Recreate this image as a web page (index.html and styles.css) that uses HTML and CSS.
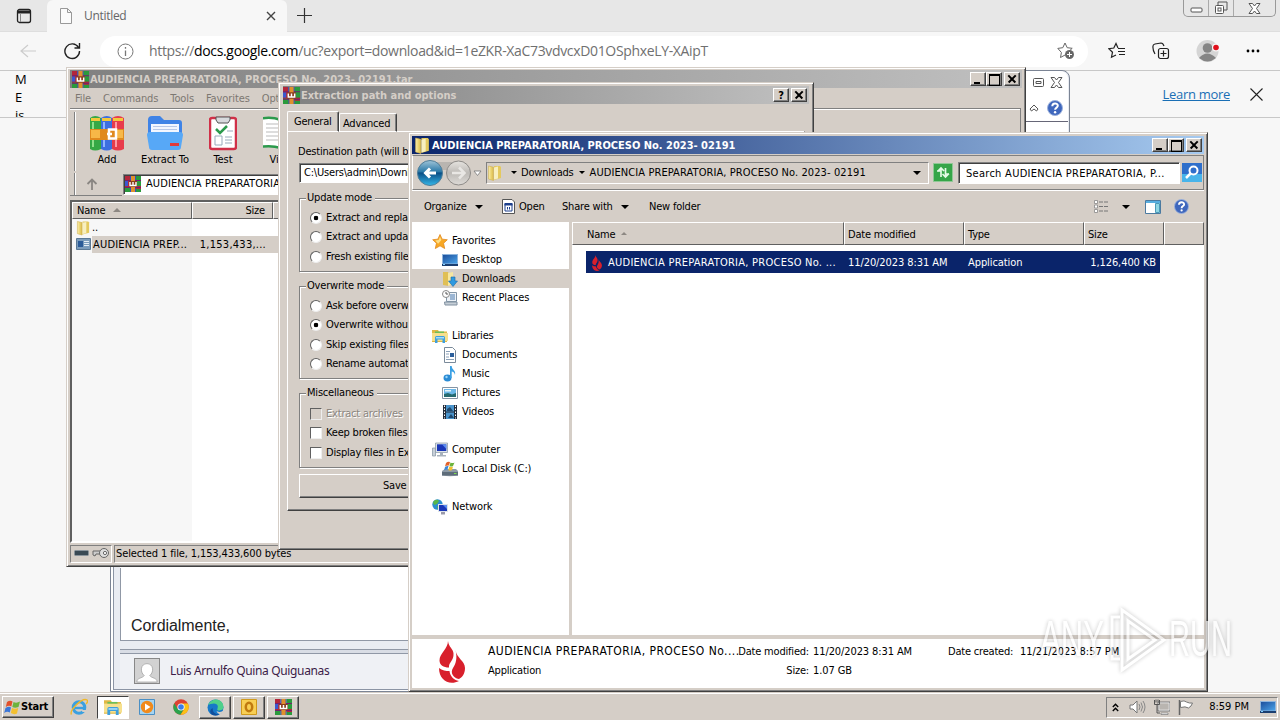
FILE: index.html
```
<!DOCTYPE html>
<html lang="en">
<head>
    <meta charset="UTF-8">
    <title>Desktop</title>
    <link rel="stylesheet" href="styles.css">
</head>
<body>
<svg class="defs" width="0" height="0">
    <defs>
        <linearGradient id="gFolder" x1="0" x2="1"><stop offset="0" stop-color="#f9eeb0"/><stop offset=".5" stop-color="#ecd470"/><stop offset="1" stop-color="#d9b94c"/></linearGradient>
        <linearGradient id="gBlue" x1="0" y1="0" x2="1" y2="1"><stop offset="0" stop-color="#1c4f9c"/><stop offset="1" stop-color="#4ba3e8"/></linearGradient>
        <linearGradient id="gBack" x1="0" y1="0" x2="0" y2="1"><stop offset="0" stop-color="#9fc4d8"/><stop offset=".45" stop-color="#2a79a8"/><stop offset=".5" stop-color="#0a4f86"/><stop offset="1" stop-color="#35b6e8"/></linearGradient>
        <linearGradient id="gFwd" x1="0" y1="0" x2="0" y2="1"><stop offset="0" stop-color="#e6e4e0"/><stop offset=".5" stop-color="#bdbab6"/><stop offset="1" stop-color="#dedbd7"/></linearGradient>
        <symbol id="rar" viewBox="0 0 16 16">
            <path fill="#b3263a" d="M0 0h5v16H0z"/><path fill="#2d4fc0" d="M5 0h6v16H5z"/><path fill="#2a9a3c" d="M11 0h5v16h-5z"/>
            <path fill="#2a9a3c" d="M0 11h5v5H0z"/><path fill="#3a58d0" d="M0 5h3v5H0z"/><path fill="#b3263a" d="M11 10h5v3h-5z"/>
            <path fill="#702070" d="M0 4h16v1H0zM0 11h16v1H0z"/><path fill="#e0902c" d="M6 0h4v16H6z"/>
            <path fill="#8a3c1c" d="M4 5h8v6H4z"/><path fill="none" stroke="#fff" stroke-width="1.400" d="M5 6v3.500h6V6M8 6v3.500"/>
        </symbol>
        <symbol id="folder" viewBox="0 0 16 16">
            <path fill="#e4c95e" d="M7 1h6l1 1v11l-7 2z"/><path fill="url(#gFolder)" stroke="#cfb052" stroke-width=".6" d="M1.500 1l5 1.200v13.300l-5-1.500z"/><path fill="#f8efc0" d="M7 2.500l4-1v12l-4 1z"/>
        </symbol>
        <symbol id="lib" viewBox="0 0 16 16">
            <path fill="#e0b845" d="M0 2h6l1 1.500h8V14H0z"/><path fill="#f6e08e" d="M0 5h16v8H0z"/><path fill="#6cbf5a" d="M3 3.500h9v1.500H3z"/><path fill="#3f9fdc" d="M3 15V9.500q0-1.500 1.500-1.500h7q1.500 0 1.500 1.500V15h-2.500v-3.500h-5V15z"/><path fill="#a5dcf7" d="M4 9h8v1.500H4z"/>
        </symbol>
        <symbol id="desk" viewBox="0 0 16 16">
            <path fill="#8fb5dc" d="M0 2h16v12H0z"/><path fill="url(#gBlue)" d="M1 3h14v8.500H1z"/><path fill="#1b3e70" d="M0 12h16v2H0z"/><path fill="#7fd0ff" d="M1 12h2v1H1z"/>
        </symbol>
        <symbol id="flame" viewBox="0 0 27 42">
            <path fill="#d8202c" d="M9 0C9 8 .500 12 .500 19.500c0 4.500 4 7 9.500 7C9.500 21 15 20 14.500 12.500 14.500 8 9.500 6 9 0z"/>
            <path fill="#d8202c" d="M16.500 9c1 8 9.500 11 9.500 18 0 6-3 9.500-6 11-6-1-9-6.500-6-11 3-4.500 4.500-10 2.500-18z"/>
            <path fill="#d8202c" d="M0 27c3 2.500 7 3 10.500 3 .5 5 4 9 9.500 10-10 5-20-1-20-13z"/>
        </symbol>
        <symbol id="help" viewBox="0 0 16 16">
            <circle cx="8" cy="8" r="7.500" fill="#3f67bd" stroke="#9db2dc"/><path fill="none" stroke="#fff" stroke-width="2" d="M5.300 6.200c0-3.600 5.500-3.600 5.500-.4 0 1.800-2.700 1.800-2.700 4"/><circle cx="8.100" cy="12.200" r="1.200" fill="#fff"/>
        </symbol>
        <symbol id="person" viewBox="0 0 26 26">
            <path fill="#d2d2d2" d="M0 0h26v26H0z"/><path fill="#fff" stroke="#aaa" d="M2 25c0-5 6-4 8-7-5-4-4-13 3-13s8 9 3 13c2 3 8 2 8 7z"/>
        </symbol>
    </defs>
</svg>

<!-- browser -->
<div class="browser">
    <div class="tabstrip">
        <svg class="ico-tabs" width="16" height="16" viewBox="0 0 16 16"><rect x="1.500" y="1.500" width="13" height="13" rx="2" fill="none" stroke="#222" stroke-width="1.300"/><path d="M1.500 2.500h13v3h-13z" fill="#222"/><path d="M4.500 5v9" stroke="#888"/></svg>
        <div class="tab">
            <svg width="14" height="16" viewBox="0 0 14 16"><path d="M1.500.5h7l4 4v11h-11zM8.500.5v4h4" fill="#fbfbfb" stroke="#999"/></svg>
            <span>Untitled</span>
            <svg width="10" height="10" viewBox="0 0 10 10"><path d="M1 1l8 8M9 1l-8 8" stroke="#444" stroke-width="1.400"/></svg>
        </div>
        <svg class="ico-plus" width="15" height="15" viewBox="0 0 15 15"><path d="M7.500 0v15M0 7.500h15" stroke="#333" stroke-width="1.200"/></svg>
        <div class="wbtns">
            <i><svg width="13" height="6" viewBox="0 0 13 6"><rect x="1" y="1" width="11" height="4" rx="1" fill="#fff" stroke="#555"/></svg></i>
            <i><svg width="14" height="14" viewBox="0 0 14 14"><path d="M4 4V1h9v8h-3" fill="none" stroke="#555"/><rect x="1.500" y="4.500" width="8" height="8" rx="1" fill="#fff" stroke="#555"/><rect x="4" y="7" width="3" height="3" fill="none" stroke="#555"/></svg></i>
            <i><svg width="13" height="11" viewBox="0 0 13 11"><path d="M1 .5h3.500l2 2.500 2-2.500H12L8.500 5.500 12 10.500H8.500l-2-2.500-2 2.500H1l3.500-5z" fill="#fff" stroke="#555"/></svg></i>
        </div>
    </div>
    <div class="navbar">
        <svg width="16" height="14" viewBox="0 0 16 14"><path d="M8 1L1 7l7 6M1 7h15" fill="none" stroke="#ccc" stroke-width="1.200"/></svg>
        <svg width="18" height="18" viewBox="0 0 18 18"><path d="M15.500 5.500A7.300 7.300 0 1 0 16.500 9M16.500 1v5h-5" fill="none" stroke="#222" stroke-width="1.400"/></svg>
        <div class="url">
            <svg width="17" height="17" viewBox="0 0 17 17"><circle cx="8.500" cy="8.500" r="7.500" fill="none" stroke="#777"/><path d="M8.500 7.500V13M8.500 4v1.800" stroke="#777" stroke-width="1.300"/></svg>
            <span>https://<b>docs.google.com</b>/uc?export=download&amp;id=1eZKR-XaC73vdvcxD01OSphxeLY-XAipT</span>
            <svg width="18" height="18" viewBox="0 0 18 18"><path d="M8 1l2.200 4.700 5 .6-3.700 3.500M8 13l-4.500 2.500.9-5L.8 6.400l5-.7L8 1" fill="none" stroke="#666"/><circle cx="12.500" cy="12.500" r="4.500" fill="#666"/><path d="M12.500 10v5M10 12.500h5" stroke="#fff"/></svg>
        </div>
        <div class="acts">
            <svg width="18" height="18" viewBox="0 0 18 18"><path d="M10 6L8 1.500 5.800 6l-5 .7 3.700 3.500-1 5L8 13M10 6.500h7M10 9.500h7M11 12.500h6" fill="none" stroke="#222" stroke-width="1.200"/></svg>
            <svg width="18" height="18" viewBox="0 0 18 18"><rect x="6.500" y="6.500" width="10" height="10" rx="2" fill="none" stroke="#222" stroke-width="1.200"/><path d="M3 12Q.5 8 1 4q0-1.500 2-2l6-1q2 0 3 3M11.500 8.500v6M8.500 11.500h6" fill="none" stroke="#222" stroke-width="1.200"/></svg>
            <svg width="24" height="24" viewBox="0 0 24 24"><circle cx="11.500" cy="12" r="11" fill="#d5d5d5"/><circle cx="11.500" cy="9" r="4.800" fill="#858585"/><path d="M3 19q8-9 17 0-8.500 7-17 0z" fill="#858585"/><circle cx="20" cy="8.500" r="4" fill="#f7f7f7"/><circle cx="20" cy="8.500" r="2.800" fill="#e0101c"/></svg>
            <svg width="14" height="4" viewBox="0 0 14 4"><circle cx="2" cy="2" r="1.400"/><circle cx="7" cy="2" r="1.400"/><circle cx="12" cy="2" r="1.400"/></svg>
        </div>
    </div>
    <div class="infobar">
        <p>M<br>E<br>is</p>
        <a>Learn more</a>
        <svg width="13" height="13" viewBox="0 0 13 13"><path d="M.5.5l12 12M12.500.5l-12 12" stroke="#222" stroke-width="1.100"/></svg>
    </div>
</div>

<!-- mail window -->
<div class="mail">
    <div class="mail-top">
        <div class="mail-btns">
            <svg width="11" height="9" viewBox="0 0 11 9"><rect x=".5" y=".5" width="10" height="8" rx="1" fill="#fff" stroke="#555"/><path d="M3 3.500h5v2H3z" fill="none" stroke="#555"/></svg>
            <svg width="13" height="11" viewBox="0 0 13 11"><path d="M1 .5h3.500l2 2.500 2-2.500H12L8.500 5.500 12 10.500H8.500l-2-2.500-2 2.500H1l3.500-5z" fill="#fff" stroke="#555"/></svg>
        </div>
        <div class="mail-btns mail-help">
            <svg width="10" height="8" viewBox="0 0 10 8"><path d="M1 5l4-4 4 4-1.500 2L5 5 2.500 7z" fill="#fff" stroke="#555"/></svg>
            <svg width="16" height="16"><use href="#help"/></svg>
        </div>
    </div>
    <div class="mail-body">Cordialmente,</div>
    <div class="mail-foot">
        <svg width="26" height="26"><use href="#person"/></svg>
        <span>Luis Arnulfo Quina Quiguanas</span>
    </div>
</div>

<!-- winrar -->
<div class="win rar">
    <div class="title off"><svg width="17" height="17"><use href="#rar"/></svg><span>AUDIENCIA PREPARATORIA, PROCESO No. 2023- 02191.tar</span>
        <div class="caps"><i class="c-min"></i><i class="c-max"></i><i class="c-x"></i></div>
    </div>
    <div class="menu"><span>File</span><span>Commands</span><span>Tools</span><span>Favorites</span><span>Options</span></div>
    <div class="rar-bars">
        <div class="rar-tools">
            <div><svg width="34" height="36" viewBox="0 0 34 36"><path fill="#35a845" d="M0 3q5-4 11 0v31q-6 3-11 0z"/><path fill="#3d6fe0" d="M11 3q6-4 11 0v31q-5 3-11 0z"/><path fill="#e83c4c" d="M22 3q6-4 12 0v31q-6 3-12 0z"/><path fill="#f3c83c" d="M1 3h9v3H1zM12 3h9v3h-9zM23 3h10v3H23z"/><path fill="#8ee08a" d="M2 7h2v25H2z"/><path fill="#8fb4ff" d="M13 7h2v25h-2z"/><path fill="#ff9aa4" d="M25 7h2v25h-2z"/><path fill="#e08a1e" d="M0 14h34v11H0z"/><path fill="#f7b848" d="M1 15h9v8H1zM26 15h7v8h-7z"/><path fill="none" stroke="#fff" stroke-width="2.500" d="M19 14.500h7v9h-7zM17 19h5"/></svg>Add</div>
            <div><svg width="36" height="36" viewBox="0 0 36 36"><path fill="#3f83e6" d="M1 5q0-4 4-4h8l4 4h15q3 0 3 3v10H1z"/><path fill="#f2f6ff" d="M4 9h28v10H4z"/><path stroke="#b8c8e8" d="M6 11.500h24M6 14.500h24"/><path fill="#57a8f7" d="M0 20q0-3 3-3h30q3 0 3 3l-2 12q0 3-3 3H5q-3 0-3-3z"/><path fill="#e23a3a" d="M23 28h9v3h-9z"/></svg>Extract To</div>
            <div><svg width="28" height="36" viewBox="0 0 28 36"><rect x="1" y="3" width="26" height="31" rx="2" fill="#fff" stroke="#d03048" stroke-width="2.500"/><path fill="#d8dadd" stroke="#555" d="M7 5V2h14v3l-2 3H9z"/><path fill="none" stroke="#2c9a4c" stroke-width="2.500" d="M7 14l4 4 7-7"/><path stroke="#9ab" d="M6 21h7v9H6zM16 22h7M16 25h7M16 28h7M18 16h6" fill="none"/></svg>Test</div>
            <div><svg width="36" height="36" viewBox="0 0 36 36"><path fill="#fff" stroke="#2c9a4c" stroke-width="2.500" d="M-3 4q10-3 21 1 7-4 17-1v28q-10-2-17 1-10-3-21-1z"/><path stroke="#2c9a4c" stroke-width="2" d="M-3 3v30" /><path stroke="#bbb" d="M3 9h12M3 13h12M3 17h12M3 21h12M3 25h12"/></svg>View</div>
        </div>
        <div class="rar-addr">
            <svg width="12" height="12" viewBox="0 0 12 12"><path d="M6 12V2M1.500 6L6 1.500 10.500 6" fill="none" stroke="#8a8682" stroke-width="1.800"/></svg>
            <div class="field"><svg width="16" height="16"><use href="#rar"/></svg><span>AUDIENCIA PREPARATORIA, PROCESO No. 2023- 02191.tar</span></div>
        </div>
    </div>
    <div class="rar-list">
        <div class="rar-row rar-head"><span>Name<i class="sort"></i></span><span>Size</span><span></span></div>
        <div class="rar-row"><span><svg width="15" height="16"><use href="#folder"/></svg>..</span><span></span></div>
        <div class="rar-row sel"><span><svg width="15" height="13" viewBox="0 0 15 13"><path fill="#7b9cbc" stroke="#5b7894" d="M.5.5h14v11H.5z"/><path fill="#2b5b98" d="M2 3h5v6H2z"/><path stroke="#e4edf5" d="M8 3.500h5M8 5.500h5M8 7.500h5"/></svg><b>AUDIENCIA PREP...</b></span><span>1,153,433,...</span></div>
    </div>
    <div class="rar-status">
        <div><svg width="36" height="12" viewBox="0 0 36 12"><rect x=".5" y="3.500" width="14" height="5" rx="1" fill="#3a4a55" stroke="#8a949c"/><path fill="#ccc" stroke="#666" d="M19 4h8v3h-5l-1 2-2-1z"/><circle cx="30" cy="6" r="4.500" fill="#ddd" stroke="#666"/><circle cx="31" cy="6" r="1.600" fill="#fff" stroke="#666"/></svg></div>
        <div>Selected 1 file, 1,153,433,600 bytes</div>
    </div>
</div>

<!-- extraction dialog -->
<div class="win dlg">
    <div class="title off"><svg width="17" height="17"><use href="#rar"/></svg><span>Extraction path and options</span>
        <div class="caps"><i class="c-help">?</i><i class="c-x"></i></div>
    </div>
    <div class="tabs"><span class="on">General</span><span>Advanced</span></div>
    <div class="page">
        <label class="dest">Destination path (will b</label>
        <div class="field path">C:\Users\admin\Downloads</div>
        <div class="group g1"><h4>Update mode</h4>
            <p><i class="radio on"></i>Extract and replace files</p>
            <p><i class="radio"></i>Extract and update files</p>
            <p><i class="radio"></i>Fresh existing files only</p>
        </div>
        <div class="group g2"><h4>Overwrite mode</h4>
            <p><i class="radio"></i>Ask before overwrite</p>
            <p><i class="radio on"></i>Overwrite without prompt</p>
            <p><i class="radio"></i>Skip existing files</p>
            <p><i class="radio"></i>Rename automatically</p>
        </div>
        <div class="group g3"><h4>Miscellaneous</h4>
            <p class="dis"><i class="check"></i>Extract archives</p>
            <p><i class="check"></i>Keep broken files</p>
            <p><i class="check"></i>Display files in Explorer</p>
        </div>
        <div class="save">Save</div>
    </div>
</div>

<!-- explorer -->
<div class="win exp">
    <div class="title"><svg width="17" height="17"><use href="#folder"/></svg><span>AUDIENCIA PREPARATORIA, PROCESO No. 2023- 02191</span>
        <div class="caps"><i class="c-min"></i><i class="c-max"></i><i class="c-x"></i></div>
    </div>
    <div class="exp-nav">
        <svg class="bf" width="66" height="28" viewBox="0 0 66 28">
            <path fill="#b9b5b0" d="M14 3h29v8H14z"/>
            <circle cx="14" cy="14" r="12.500" fill="url(#gBack)" stroke="#4f7d98"/><path d="M20 14H9M14 9.500L9.500 14l4.500 4.500" fill="none" stroke="#fff" stroke-width="3"/>
            <circle cx="42.500" cy="14" r="12" fill="url(#gFwd)" stroke="#8e8b88"/><path d="M36 14h12M43 8.500l5.500 5.500-5.500 5.500" fill="none" stroke="#e9e7e4" stroke-width="2.500"/>
            <path d="M58 12h7l-3.500 4.500z" fill="#fff" stroke="#777" stroke-width=".8"/>
        </svg>
        <div class="crumb"><svg width="16" height="18"><use href="#folder"/></svg><i class="tri"></i><span class="c1">Downloads</span><i class="tri"></i><span class="c2">AUDIENCIA PREPARATORIA, PROCESO No. 2023- 02191</span><i class="tri big"></i></div>
        <svg class="go" width="20" height="19" viewBox="0 0 20 19"><path fill="#35a548" stroke="#8fc795" d="M.5.5h19v18H.5z"/><path d="M8 14V5M4.500 8.500L8 5l3 3M12.500 5v9M9.500 11l3 3 3.500-3.500M4 8h4M13 11h3" fill="none" stroke="#e4fbe6" stroke-width="1.700"/></svg>
        <div class="field search">Search AUDIENCIA PREPARATORIA, P...</div>
        <svg width="20" height="19" viewBox="0 0 20 19"><path fill="#2f6fcb" d="M0 0h20v19H0z"/><path fill="#48b4ea" d="M0 11h20v8H0z"/><circle cx="11.500" cy="7.500" r="4" fill="#2f6fcb" stroke="#fff" stroke-width="2"/><path d="M8.500 10.500L4 15" stroke="#fff" stroke-width="2.500"/></svg>
    </div>
    <div class="exp-cmd">
        <span class="w1">Organize<i class="tri big"></i></span>
        <span class="w2"><svg width="13" height="15" viewBox="0 0 13 15"><path fill="#fff" stroke="#555" d="M.5.500h9.500l2.500 2.500v11.500H.5z"/><path fill="#1c3f8c" d="M2.500 4h8v2.500h-8z"/><path fill="none" stroke="#1c3f8c" d="M3 5h7v7H3zM5.500 8v2.500M7.500 8v2.500"/></svg>Open</span>
        <span class="w3">Share with<i class="tri big"></i></span>
        <span>New folder</span>
        <div class="views">
            <svg width="15" height="13" viewBox="0 0 15 13"><path d="M.5.5h3v3h-3zM.5 5h3v3h-3zM.5 9.500h3v3h-3z" fill="#fff" stroke="#888" stroke-width=".8"/><path d="M5 2h4M10 2h4M5 6.500h4M10 6.500h4M5 11h4M10 11h4" stroke="#777"/></svg>
            <i class="tri big"></i>
            <svg width="16" height="14" viewBox="0 0 16 14"><path fill="#fff" stroke="#4b7aa0" d="M.5.5h15v13H.5z"/><path fill="#57aee0" d="M1 1h14v2H1z"/><path fill="#8fd6e4" stroke="#4b9ab8" d="M10.500 3.500h4v9h-4z"/></svg>
            <svg width="15" height="15"><use href="#help"/></svg>
        </div>
    </div>
    <div class="exp-main">
        <div class="side">
            <p><svg width="16" height="15" viewBox="0 0 17 16"><path fill="#f8a824" stroke="#e0861a" stroke-width=".8" d="M8.500.5l2.300 5 5.500.6-4 3.800 1.200 5.600-5-2.900-5 2.900 1.200-5.600-4-3.800 5.500-.6z"/><path fill="#fde08a" d="M8.500 3l1.500 3.500-3.500 4-3-3.500 3.500-.5z"/></svg>Favorites</p>
            <p class="in"><svg width="16" height="16"><use href="#desk"/></svg>Desktop</p>
            <p class="in sel"><svg width="16" height="16" viewBox="0 0 16 16"><path fill="#e0bf55" d="M1 1h5l1 2v12l-6-1z"/><path fill="#f7e7a0" d="M6 2l5-1v12l-5 2z"/><path fill="#2f9ae0" stroke="#186aa8" stroke-width=".6" d="M9 6h4v4h2.500L11 15.500 6.500 10H9z"/></svg>Downloads</p>
            <p class="in"><svg width="16" height="16" viewBox="0 0 16 16"><path fill="#eef3f8" stroke="#8497a8" d="M4.500 2.500h10v9h-10z"/><path fill="#c5ced6" stroke="#8090a0" d="M2.500 12h12.500v3h-12z"/><path stroke="#4a7ab0" d="M8 5h5M8 7h5M8 9h5"/><circle cx="4" cy="4" r="3.500" fill="#fff" stroke="#888"/><path d="M4 2v2h2" fill="none" stroke="#555"/></svg>Recent Places</p>
            <p></p>
            <p><svg width="16" height="16"><use href="#lib"/></svg>Libraries</p>
            <p class="in"><svg width="16" height="16" viewBox="0 0 16 16"><path fill="#fff" stroke="#7a8a9a" d="M2.500.5h8l3 3v12h-11z"/><path stroke="#8aa0b8" d="M4 4.500h4M4 7h3M4 10h3M4 12.500h8"/><path fill="#2c5f9c" d="M8 6h4v4H8z"/></svg>Documents</p>
            <p class="in"><svg width="16" height="16" viewBox="0 0 16 16"><ellipse cx="5.500" cy="12" rx="4" ry="3.400" fill="#2a8bd4"/><path fill="#3aa0e4" d="M8 0h1.700c0 4 4.500 4 3.300 9-.6-3-2-3.500-3.300-3.500V12H8z"/><circle cx="4.500" cy="11" r="1.200" fill="#9bd6fa"/></svg>Music</p>
            <p class="in"><svg width="16" height="16" viewBox="0 0 16 16"><path fill="#fff" stroke="#8494a4" d="M.5 2.500h15v11H.5z"/><path fill="#6cb8e8" d="M2 4h12v8H2z"/><path fill="#256a70" d="M2 9l4-1 4 1.500L14 8v4H2z"/><path fill="#e4f4fb" d="M3 5h6v1.500H3z"/></svg>Pictures</p>
            <p class="in"><svg width="16" height="16" viewBox="0 0 16 16"><path fill="#222b38" d="M1 1h14v14H1z"/><path fill="#4a94cc" d="M4 1h8v6.500H4zM4 8.500h8V15H4z"/><path stroke="#fff" stroke-dasharray="1.500 1.500" d="M2.500 1.500v13M13.500 1.500v13"/><path fill="#20486c" d="M5 5l3-2 3 4H5zM6 14l3-4 3 4z"/></svg>Videos</p>
            <p></p>
            <p><svg width="16" height="16" viewBox="0 0 16 16"><path fill="#c8d0d8" stroke="#8494a4" stroke-width=".7" d="M.5 6h3v8h-3z"/><path fill="#dde3e8" stroke="#8494a4" stroke-width=".7" d="M3.500 1h12v9.500h-12z"/><path fill="#1a37b8" d="M5 2.300h9.300V9H5z"/><path fill="#5c8df0" d="M10 2.300h4.300V7z"/><path fill="#a8b2bc" d="M8 10.500h3v2.500h3v1.500H5V13h3z"/></svg>Computer</p>
            <p class="in"><svg width="16" height="16" viewBox="0 0 16 16"><path fill="#8d9aa6" d="M0 10l3-2h11l2 2v4.500q-8 1.500-16 0z"/><path fill="#5e6d7a" d="M0 11h16v3.500H0z"/><path fill="#e2622a" d="M4 2q2-2 4-1L7 4.500q-2-.5-4 1z"/><path fill="#6cb33c" d="M8.500 1.500q2 1 4 0L11 5q-2 1-3.500 0z"/><path fill="#3a86d8" d="M3 6q2-1.500 3.500-1L5.500 8.500q-2-.5-3.500 1z"/><path fill="#f3c030" d="M7.300 5.500q2 1 3.700 0L10 9q-2 1-3.700 0z"/><path fill="#7ce04c" d="M12 12h2.500v1H12z"/></svg>Local Disk (C:)</p>
            <p></p>
            <p><svg width="16" height="16" viewBox="0 0 16 16"><circle cx="5.500" cy="5.500" r="5.200" fill="#2c8fd0"/><path fill="#58b848" d="M3 1q3-1 4 1L5 5 2 6 1 3zM5 7l3 1-2 3z"/><path fill="#dde3e8" d="M6 5h10v8H6z"/><path fill="#1a37b8" d="M7 6h8v6H7z"/><path fill="#5c8df0" d="M11 6h4v4z"/><path fill="#99a" d="M9 13h4v2.500H9z"/></svg>Network</p>
        </div>
        <div class="files">
            <div class="cols fhead"><span>Name<i class="sort"></i></span><span>Date modified</span><span>Type</span><span>Size</span><span></span></div>
            <div class="frow"><svg width="12" height="16" viewBox="-2 0 30 42"><use href="#flame" width="27" height="42"/></svg><span class="n">AUDIENCIA PREPARATORIA, PROCESO No. ...</span><span class="d">11/20/2023 8:31 AM</span><span>Application</span><span class="s">1,126,400 KB</span></div>
        </div>
    </div>
    <div class="detail">
        <svg width="27" height="42"><use href="#flame"/></svg>
        <div class="d1"><p class="big-name">AUDIENCIA PREPARATORIA, PROCESO No....</p><p>Application</p></div>
        <div class="d2"><p>Date modified:</p><p>Size:</p></div>
        <div class="d3"><p>11/20/2023 8:31 AM</p><p>1.07 GB</p></div>
        <div class="d4"><p>Date created:</p></div>
        <div class="d5"><p>11/21/2023 8:57 PM</p></div>
    </div>
</div>

<!-- taskbar -->
<div class="taskbar">
    <div class="start"><svg width="17" height="15" viewBox="0 0 17 15"><path fill="#e2502a" d="M3 2q3-2 5.500-.5L7.300 6.500Q5 5 1.800 7z"/><path fill="#6cb33c" d="M9.500 2q3 1.500 6.500-.5L14.500 7Q11 8.500 8.300 7z"/><path fill="#3a76d8" d="M1.500 8Q5 6 7 7.500L5.800 12.500Q3 11 .2 13z"/><path fill="#f3c030" d="M8 8q3 1.500 6.200 0L13 13.500Q10 15 6.800 13z"/></svg>Start</div>
    <div class="tb"><svg width="18" height="18" viewBox="0 0 18 18"><circle cx="9" cy="9.500" r="5.800" fill="none" stroke="#3aa0e0" stroke-width="3"/><path d="M5 10h11" stroke="#3aa0e0" stroke-width="2.400"/><path d="M11.500 12h6v2h-5z" fill="#d5cec7"/><path d="M1.500 16.500C-1 13 12-1 17 2c1 1 0 3-1 4" fill="none" stroke="#f0b828" stroke-width="1.400"/></svg></div>
    <div class="tb down"><svg width="18" height="18"><use href="#lib"/></svg></div>
    <div class="tb"><svg width="16" height="16" viewBox="0 0 16 16"><path fill="#a5d4f2" stroke="#4b8fc4" d="M.5.5h15v15H.5z"/><circle cx="8" cy="8" r="6.200" fill="#f08a1c"/><path fill="#fff" d="M6 4.500l5.500 3.500L6 11.500z"/></svg></div>
    <div class="tb"><svg width="16" height="16" viewBox="0 0 16 16"><circle cx="8" cy="8" r="7.700" fill="#dd4232"/><path fill="#2ba24c" d="M1.300 4.200A7.700 7.700 0 0 0 7.500 15.700L11 10 4.700 10z"/><path fill="#fbc116" d="M8 4.500h6.900A7.700 7.700 0 0 1 7.500 15.700L11.300 10z"/><circle cx="8" cy="8" r="3.600" fill="#fff"/><circle cx="8" cy="8" r="2.800" fill="#3a7de8"/></svg></div>
    <div class="tb up"><svg width="17" height="17" viewBox="0 0 17 17"><circle cx="8.500" cy="8.500" r="8" fill="#1778c8"/><path fill="#4fd08a" d="M1 6q3-6 9-5.500Q16.500 2 16.500 8q0 3-4 3.500-3 0-2-2Q12 5 7 4.500 3 4.500 1 6z"/><path fill="#124f9c" d="M5.500 9q0 6 7 6.500-4 2-8 0-3-4 1-6.500z"/><path fill="#d5cec7" d="M9.500 12q4 2 7-.5-1 3-3.500 4-3-1-3.500-3.500z"/></svg></div>
    <div class="tb up"><svg width="16" height="16" viewBox="0 0 16 16"><path fill="#f8cf54" stroke="#d09a1c" d="M.5.5h15v15H.5z"/><ellipse cx="8" cy="8" rx="3.200" ry="4.200" fill="none" stroke="#c07a10" stroke-width="2.500"/></svg></div>
    <div class="tb up"><svg width="17" height="16" viewBox="0 0 16 16" preserveAspectRatio="none"><use href="#rar"/></svg></div>
    <div class="tray">
        <svg width="7" height="9" viewBox="0 0 7 9"><path d="M.8 4l2.700-2.700L6.200 4M.8 8l2.700-2.700L6.200 8" fill="none" stroke="#000" stroke-width="1.400"/></svg>
        <svg width="17" height="14" viewBox="0 0 17 14"><path d="M1 5h3l4-4v12l-4-4H1z" fill="#fff" stroke="#777"/><path d="M10 4q2 3 0 6M12 2.500q3 4.500 0 9M14 1q4 6 0 12" fill="none" stroke="#888"/></svg>
        <svg width="16" height="16" viewBox="0 0 16 16"><path d="M4.500 3.500h11v8h-11z" fill="#b9b5b0" stroke="#fff" stroke-width="1.500"/><path d="M4 3h12v9H4z" fill="none" stroke="#555" stroke-width=".8"/><path d="M7 14h7v1.500H7z" fill="#fff" stroke="#666" stroke-width=".6"/><path d="M.5 1v4.500h5V1M2 .5v3M4 .5v3M3 6v8h3" fill="none" stroke="#555"/></svg>
        <svg width="16" height="15" viewBox="0 0 16 15"><path d="M1.500 0v15" stroke="#666" stroke-width="1.500"/><path d="M2.500 1.500q4-1.500 6 .5 3 1.500 6 1-1 3.500-4 5-3-2-8-.5z" fill="#fff" stroke="#777"/></svg>
        <span>8:59 PM</span>
        <svg width="16" height="14" viewBox="0 2 16 12"><use href="#desk" width="16" height="16"/></svg>
    </div>
</div>

<!-- watermark -->
<svg class="mark" width="210" height="76" viewBox="0 0 210 76">
    <g fill="#fff">
        <text x="10" y="53" textLength="64" lengthAdjust="spacingAndGlyphs">ANY</text>
        <text x="139" y="53" textLength="63" lengthAdjust="spacingAndGlyphs">RUN</text>
    </g>
    <path d="M90 14h-8v42h8M92 7v60l42-30zM98 18v38l27-19z" fill="none" stroke="#fff" stroke-width="3"/>
</svg>
</body>
</html>
```
FILE: styles.css
```
*{
    margin: 0;
    padding: 0;
    box-sizing: border-box;
}
body{
    width: 1280px;
    height: 720px;
    overflow: hidden;
    position: relative;
    background: #f7f7f7;
    font: 11px/14px "DejaVu Sans Condensed", "DejaVu Sans", sans-serif;
    font-stretch: condensed;
    letter-spacing: -0.2px;
    color: #000;
    white-space: nowrap;
}
i{
    font-style: normal;
}
svg{
    display: block;
    flex: none;
}
.defs{
    position: absolute;
}

/* browser */
.browser{
    height: 692px;
    font-family: "Open Sans", sans-serif;
    font-stretch: normal;
    letter-spacing: 0;
}
.tabstrip{
    height: 32px;
    background: #e7e7e7;
    display: flex;
    align-items: center;
    border-bottom: 1px solid #dedede;
}
.ico-tabs{
    margin: 0 15px 0 16px;
}
.tab{
    width: 240px;
    height: 32px;
    padding: 0 11px 0 12px;
    display: flex;
    align-items: center;
    background: #f7f7f7;
    border-radius: 6px 6px 0 0;
    font-size: 12px;
    letter-spacing: -0.3px;
    color: #666;
}
.tab span{
    flex: 1;
    margin-left: 11px;
}
.ico-plus{
    margin-left: 10px;
}
.wbtns{
    display: flex;
    align-self: flex-start;
    margin: 0 4px 0 auto;
    height: 17px;
    width: 93px;
    border: 1px solid #999;
    border-top: 0;
    border-radius: 0 0 5px 5px;
}
.wbtns i{
    flex: 0 0 25px;
    display: flex;
    align-items: center;
    justify-content: center;
    border-right: 1px solid #aaa;
}
.wbtns i:first-child{
    align-items: flex-end;
    padding-bottom: 3px;
}
.wbtns i:last-child{
    flex: 1;
    border: 0;
}
.navbar{
    height: 39px;
    display: flex;
    align-items: center;
    padding: 0 20px;
    border-bottom: 1px solid #c8c8c8;
}
.navbar > svg + svg{
    margin-left: 27px;
}
.url{
    width: 988px;
    height: 31px;
    margin-left: 19px;
    padding: 0 13px 0 17px;
    background: #fff;
    border-radius: 16px;
    display: flex;
    align-items: center;
    font-size: 14px;
    color: #707070;
}
.url span{
    flex: 1;
    margin-left: 15px;
    letter-spacing: -0.34px;
}
.url b{
    font-weight: normal;
    color: #000;
}
.acts{
    display: flex;
    align-items: center;
    margin-left: 20px;
}
.acts svg:nth-child(2){ margin-left: 26px; }
.acts svg:nth-child(3){ margin-left: 26px; }
.acts svg:nth-child(4){ margin-left: 26px; }
.infobar{
    height: 47px;
    display: flex;
    align-items: center;
    padding: 0 17px 0 15px;
    border-bottom: 1px solid #c8c8c8;
    font-size: 13px;
    overflow: hidden;
}
.infobar p{
    align-self: flex-start;
    line-height: 18px;
    font-size: 13px;
    margin-top: -1px;
}
.infobar a{
    margin-left: auto;
    margin-right: 20px;
    color: #1a6fb5;
    text-decoration: underline;
    font-size: 13px;
    letter-spacing: -0.3px;
}

/* mail */
.mail{
    position: absolute;
    left: 110px;
    top: 70px;
    width: 960px;
    height: 622px;
    padding: 0 1px 1px 9px;
    background: #e9ecf2;
    border: 1px solid #7b8494;
    border-radius: 0 8px 0 0;
    display: flex;
    flex-direction: column;
    box-shadow: inset 2px -1px 0 #fff, inset 3px -2px 0 #8b94a4;
}
.mail-top{
    height: 497px;
    flex: none;
    background: #fff;
    border-radius: 0 8px 0 0;
}
.mail-btns{
    display: flex;
    align-items: center;
    justify-content: flex-end;
    gap: 6px;
    height: 23px;
    padding-right: 5px;
}
.mail-help{
    height: 28px;
    gap: 8px;
    border-bottom: 1px solid #667;
}
.mail-body{
    height: 73px;
    flex: none;
    background: #fff;
    border: 1px solid #9098a6;
    border-top: 0;
    padding: 48px 0 0 10px;
    font: 16px/20px "Liberation Sans", sans-serif;
    letter-spacing: -0.05px;
    color: #222;
}
.mail-foot{
    margin-top: 8px;
    height: 40px;
    background: #eff1f5;
    border-top: 1px solid #9098a6;
    box-shadow: inset 0 3px 0 #d9dde5, inset 0 4px 0 #9098a6;
    display: flex;
    align-items: center;
    gap: 10px;
    padding: 3px 0 0 14px;
    font-family: "Noto Sans", sans-serif;
    font-stretch: normal;
    font-size: 12px;
    letter-spacing: -0.35px;
    color: #3c1c48;
}
.mail-foot svg{
    border: 1px solid #888;
}

/* classic windows */
.win{
    position: absolute;
    background: #d5cec7;
    border: 1px solid;
    border-color: #d5cec7 #404040 #404040 #d5cec7;
    box-shadow: inset 1px 1px 0 #fff, inset -1px -1px 0 #808080;
    padding: 3px;
    overflow: hidden;
}
.title{
    height: 18px;
    display: flex;
    align-items: center;
    padding: 0 2px;
    background: linear-gradient(90deg, #0a246a, #a6caf0);
    color: #fff;
    font-weight: bold;
    letter-spacing: -0.01px;
}
.title.off{
    background: linear-gradient(90deg, #808080, #c0c0c0);
    color: #d5cec7;
}
.title span{
    margin-left: 1px;
    padding-top: 1px;
}
.caps{
    display: flex;
    margin-left: auto;
}
.caps i{
    width: 16px;
    height: 14px;
    background: #d5cec7;
    border: 1px solid;
    border-color: #fff #404040 #404040 #fff;
    box-shadow: inset -1px -1px 0 #808080;
    position: relative;
    color: #000;
    text-align: center;
    line-height: 13px;
}
.caps .c-x{
    margin-left: 2px;
}
.c-min::after{
    content: "";
    position: absolute;
    left: 3px;
    top: 9px;
    width: 6px;
    height: 2px;
    background: #000;
}
.c-max::after{
    content: "";
    position: absolute;
    left: 2px;
    top: 1px;
    width: 9px;
    height: 9px;
    border: 1px solid #000;
    border-top-width: 2px;
}
.c-x::before,
.c-x::after{
    content: "";
    position: absolute;
    left: 2px;
    top: 5px;
    width: 10px;
    height: 1.5px;
    background: #000;
    transform: rotate(45deg);
}
.c-x::after{
    transform: rotate(-45deg);
}
.field{
    background: #fff;
    border: 1px solid;
    border-color: #808080 #fff #fff #808080;
    box-shadow: inset 1px 1px 0 #404040;
    overflow: hidden;
}
.sort{
    display: inline-block;
    border: 4px solid transparent;
    border-top: 0;
    border-bottom: 4px solid #8d8883;
    margin: 0 0 2px 8px;
}
.tri{
    display: inline-block;
    border: 3px solid transparent;
    border-bottom: 0;
    border-top: 3px solid #000;
}
.tri.big{
    border-width: 4px 4px 0;
}

/* winrar */
.rar{
    left: 66px;
    top: 67px;
    width: 960px;
    height: 500px;
}
.rar .title{
    margin-top: -1px;
    letter-spacing: -0.03px;
}
.menu{
    height: 20px;
    display: flex;
    align-items: center;
    gap: 12px;
    padding: 1px 0 0 5px;
    letter-spacing: -0.1px;
    color: #7d7872;
}
.rar-bars{
    height: 88px;
    border-top: 1px solid #808080;
    border-right: 1px solid #808080;
    border-bottom: 1px solid #808080;
    box-shadow: inset 0 1px 0 #fff;
    margin-right: 1px;
}
.rar-tools{
    height: 59px;
    margin: 3px 0 0 4px;
    padding-left: 3px;
    border-left: 1px solid #808080;
    box-shadow: inset 1px 0 0 #fff;
    display: flex;
    overflow: hidden;
    letter-spacing: -0.1px;
}
.rar-tools div{
    width: 58px;
    padding-top: 3px;
    display: flex;
    flex-direction: column;
    align-items: center;
    line-height: 17px;
}
.rar-addr{
    display: flex;
    align-items: center;
    margin: 2px 0 0 4px;
    height: 22px;
    padding-left: 11px;
    border-left: 1px solid #808080;
    box-shadow: inset 1px 0 0 #fff;
}
.rar-addr .field{
    flex: 1;
    height: 21px;
    margin-left: 25px;
    display: flex;
    align-items: center;
    gap: 5px;
    padding-left: 1px;
    letter-spacing: 0.1px;
    outline: 1px solid #d5cec7;
}
.rar-list{
    height: 343px;
    margin: 4px 2px 0 0;
    border: 2px solid;
    border-color: #606060 #fff #fff #606060;
    background: linear-gradient(90deg, #f7f7f7 120px, #fff 120px);
}
.rar-row{
    height: 17px;
    display: flex;
}
.rar-row.sel{
    background: #d5cec7;
    margin-left: 20px;
}
.rar-row.sel span:first-child{
    margin-left: -20px;
}
.rar-row b{
    font-weight: normal;
    margin-left: 1px;
    letter-spacing: 0.2px;
}
.rar-row span{
    width: 81px;
    display: flex;
    align-items: center;
    justify-content: flex-end;
    padding-right: 7px;
}
.rar-row.sel span{
    letter-spacing: 0.25px;
}
.rar-row span:first-child{
    width: 120px;
    justify-content: flex-start;
    padding: 0 0 0 4px;
}
.rar-row:not(.rar-head) span:first-child{
    gap: 1px;
}
.rar-head span{
    background: #d5cec7;
    border: 1px solid;
    border-color: #fff #606060 #606060 #fff;
}
.rar-head span:last-child{
    flex: 1;
}
.rar-status{
    display: flex;
    gap: 2px;
    margin-top: 2px;
    height: 18px;
}
.rar-status div{
    border: 1px solid;
    border-color: #808080 #fff #fff #808080;
    padding: 1px 2px 0;
    line-height: 13px;
}
.rar-status div:first-child{
    width: 42px;
    padding-left: 3px;
}
.rar-status div:last-child{
    flex: 1;
    padding-left: 1px;
    letter-spacing: -0.12px;
}

/* extraction dialog */
.dlg{
    left: 278px;
    top: 82px;
    width: 536px;
    height: 468px;
    padding: 3px 4px;
}
.dlg .title{
    padding-left: 0;
}
.tabs{
    display: flex;
    align-items: flex-end;
    height: 28px;
    padding-left: 4px;
}
.tabs span{
    height: 19px;
    width: 58px;
    padding: 3px 0 0 3px;
    border: 1px solid;
    border-color: #fff #404040 transparent #fff;
    border-radius: 2px 2px 0 0;
    box-shadow: inset -1px 0 0 #808080;
}
.tabs .on{
    width: 52px;
    height: 21px;
    padding-left: 6px;
}
.page{
    height: 380px;
    margin: -1px 4px 0 4px;
    padding: 13px 12px 0 11px;
    border: 1px solid;
    border-color: #fff #404040 #404040 #fff;
    box-shadow: inset -1px -1px 0 #808080;
}
.dest{
    display: block;
    height: 18px;
    margin-left: -1px;
}
.path{
    height: 20px;
    padding: 2px 0 0 4px;
}
.group{
    position: relative;
    border: 1px solid #808080;
    box-shadow: 1px 1px 0 #fff, inset 1px 1px 0 #fff;
    padding: 9px 0 0 10px;
}
.group h4{
    position: absolute;
    left: 6px;
    top: -8px;
    padding: 0 3px 0 1px;
    font-weight: normal;
    background: #d5cec7;
}
.g1{ margin-top: 15px; height: 74px; }
.g2{ margin-top: 14px; height: 93px; }
.g3{ margin-top: 14px; height: 75px; padding-top: 10px; }
.group p{
    height: 19.500px;
    display: flex;
    align-items: center;
    gap: 4px;
}
.dis{
    color: #8b8680;
    text-shadow: 1px 1px 0 #fff;
}
.radio,
.check{
    width: 12px;
    height: 12px;
    background: #fff;
    border: 1px solid;
    border-color: #606060 #eee #eee #606060;
}
.radio{
    border-radius: 50%;
}
.radio.on{
    background: radial-gradient(circle, #000 2px, #fff 2.600px);
}
.dis .check{
    background: #d5cec7;
}
.save{
    margin-top: 6px;
    height: 24px;
    padding: 4px 0 0 83px;
    border: 1px solid;
    border-color: #fff #404040 #404040 #fff;
    box-shadow: inset 0 -1px 0 #808080;
}

/* explorer */
.exp{
    left: 408px;
    top: 132px;
    width: 800px;
    height: 560px;
}
.exp-nav{
    height: 35px;
    margin-top: 1px;
    display: flex;
    align-items: center;
    border: 1px solid;
    border-color: #808080 #808080 #808080 #fff;
    box-shadow: 0 1px 0 #fff;
    padding-left: 3px;
}
.crumb{
    width: 443px;
    height: 22px;
    margin-left: 4px;
    border: 1px solid;
    border-color: #808080 #fff #fff #808080;
    display: flex;
    align-items: center;
    padding-right: 7px;
}
.crumb .tri{
    margin-left: 8px;
}
.crumb .c1{
    margin-left: 4px;
    margin-right: -3px;
}
.crumb .c2{
    margin-left: 5px;
    letter-spacing: 0.09px;
}
.crumb .big{
    margin-left: auto;
}
.go{
    margin-left: 4px;
}
.search{
    width: 222px;
    height: 22px;
    margin: 0 2px 0 5px;
    padding: 4px 0 0 7px;
    letter-spacing: 0.28px;
}
.exp-cmd{
    height: 32px;
    display: flex;
    align-items: center;
    padding: 1px 15px 0 12px;
}
.exp-cmd span{
    display: flex;
    align-items: center;
}
.exp-cmd span .tri{
    margin-left: 8px;
}
.w1{ width: 78px; }
.w2{ width: 60px; }
.w3{ width: 87px; }
.w2 svg{
    margin-right: 4px;
}
.views{
    display: flex;
    align-items: center;
    margin-left: auto;
}
.views .tri{
    margin: 0 15px 0 13px;
}
.views svg:last-child{
    margin-left: 13px;
}
.exp-main{
    display: flex;
    height: 413px;
    background: #fff;
}
.side{
    width: 160px;
    padding-top: 9px;
    border-right: 3px solid #d5cec7;
    letter-spacing: -0.12px;
}
.side p{
    height: 19px;
    display: flex;
    align-items: center;
    gap: 4px;
    padding: 1px 0 0 20px;
}
.side .in{
    padding-left: 30px;
}
.side .sel{
    background: #d5cec7;
}
.files{
    flex: 1;
}
.cols{
    display: grid;
    grid-template-columns: 272px 120px 120px 80px 1fr;
    height: 23px;
}
.fhead span{
    background: #d5cec7;
    padding: 5px 0 0 3px;
    border: 1px solid;
    border-color: #fff #606060 #606060 #fff;
}
.fhead span:first-child{
    padding-left: 14px;
}
.fhead .sort{
    border-width: 0 3px 3px;
    margin: 0 0 3px 6px;
}
.frow{
    width: 574px;
    height: 22px;
    margin: 6px 0 0 14px;
    padding: 1px 4px 0 5px;
    display: flex;
    align-items: center;
    background: #0a246a;
    color: #fff;
    letter-spacing: -0.08px;
}
.frow .n{
    width: 245px;
    padding-left: 5px;
    letter-spacing: 0.25px;
}
.frow .d{
    width: 120px;
}
.frow .s{
    margin-left: auto;
}
.detail{
    height: 53px;
    border-top: 4px solid #d5cec7;
    background: #fff;
    display: flex;
    padding-left: 27px;
    line-height: 19px;
}
.detail svg{
    margin: 2px 22px 0 0;
}
.detail div{
    padding-top: 3px;
}
.big-name{
    font-size: 12px;
    letter-spacing: 0.45px;
}
.detail .d1{ width: 249px; }
.detail .d2{ width: 72px; text-align: right; }
.detail .d3{ width: 137px; padding-left: 4px; letter-spacing: -0.1px; }
.detail .d4{ width: 68px; padding-left: 2px; }
.detail .d5{ padding-left: 6px; letter-spacing: -0.05px; }

/* taskbar */
.taskbar{
    position: absolute;
    left: 0;
    top: 692px;
    width: 1280px;
    height: 28px;
    display: flex;
    align-items: center;
    padding: 1px 2px 0;
    background: #d5cec7;
    border-top: 1px solid #d5cec7;
    box-shadow: inset 0 1px 0 #fff;
}
.start{
    width: 52px;
    height: 22px;
    margin-right: 9px;
    display: flex;
    align-items: center;
    padding-left: 1px;
    font-weight: bold;
    border: 1px solid;
    border-color: #fff #404040 #404040 #fff;
    box-shadow: inset -1px -1px 0 #808080;
}
.tb{
    width: 32px;
    height: 23px;
    margin-right: 2px;
    display: flex;
    align-items: center;
    justify-content: center;
    border: 1px solid transparent;
}
.tb.down{
    background: #fff;
    border-color: #404040 #fff #fff #404040;
}
.tb.up{
    border-color: #fff #404040 #404040 #fff;
    box-shadow: inset -1px -1px 0 #808080;
}
.tray{
    margin-left: auto;
    width: 172px;
    height: 21px;
    display: flex;
    align-items: center;
    gap: 8px;
    padding: 0 1px 0 5px;
    border: 1px solid;
    border-color: #808080 #fff #fff #808080;
}
.tray svg:first-child{
    margin-right: 2px;
}
.tray span{
    margin: 0 3px 0 auto;
    letter-spacing: 0;
}

.mark{
    position: absolute;
    left: 1030px;
    top: 603px;
    opacity: .65;
    filter: drop-shadow(0 0 2px rgba(0,0,0,.35));
    font: 50px "Liberation Sans Narrow", "Liberation Sans", sans-serif;
    letter-spacing: 0;
}
```
